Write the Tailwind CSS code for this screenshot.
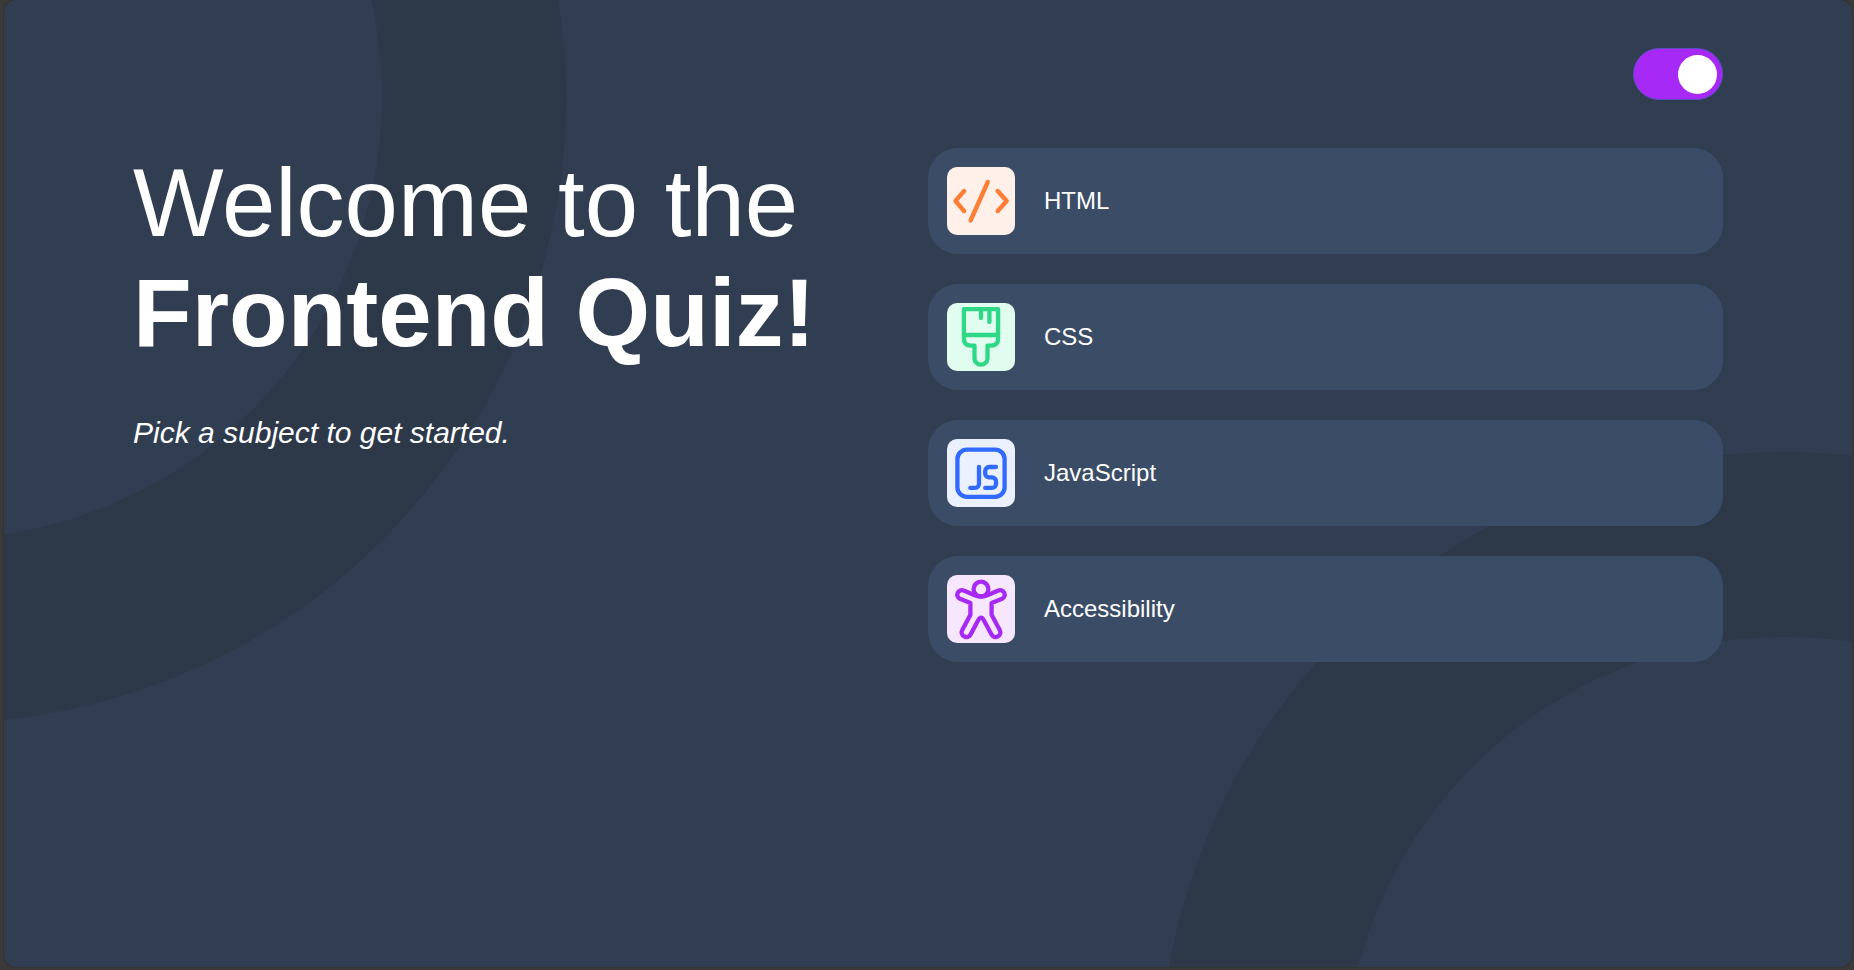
<!DOCTYPE html>
<html lang="en">
<head>
<meta charset="UTF-8">
<meta name="viewport" content="width=device-width, initial-scale=1">
<title>Frontend Quiz</title>
<script src="https://cdn.jsdelivr.net/npm/@tailwindcss/browser@4"></script>
</head>
<body class="flex min-h-screen bg-[#3a3a3a] pr-0.5 pb-[3px] pl-1 font-['Liberation_Sans',Arial,sans-serif] text-white">
  <div class="relative isolate flex-1 overflow-hidden rounded-xl bg-[#313e51] px-[129px] shadow-[0_0_2px_rgba(0,0,0,0.35)]">
    <!-- Background rings -->
    <div class="absolute -top-[529px] -left-[690px] -z-10 size-[1252px] rounded-full border-[184px] border-[#2d3949]" aria-hidden="true"></div>
    <div class="absolute -right-[559px] -bottom-[737px] -z-10 size-[1252px] rounded-full border-[185px] border-[#2d3949]" aria-hidden="true"></div>

    <header class="flex justify-end py-12">
      <input id="theme" type="checkbox" role="switch" aria-label="Dark mode" checked class="flex h-[52px] w-[90px] cursor-pointer appearance-none items-center rounded-full border border-[#5a4fc0] bg-[#a729f5] px-[5px] before:size-[39px] before:rounded-full before:bg-white checked:justify-end">
    </header>

    <main class="grid grid-cols-2">
      <section>
        <h1 class="text-[96px] leading-[110px]">Welcome to the<br><strong class="font-bold">Frontend Quiz!</strong></h1>
        <p class="mt-12 text-[30px] leading-[34px] italic">Pick a subject to get started.</p>
      </section>

      <ul class="flex flex-col gap-[30px]">
        <li>
          <button type="button" class="flex h-[106px] w-full cursor-pointer items-center gap-[29px] rounded-[30px] bg-[#3b4d66] px-[19px] text-left text-2xl">
            <svg class="size-[68px] rounded-[10px] bg-[#fff1e9]" viewBox="0 0 68 68" fill="none" stroke="#ff7e35" stroke-width="4.4" stroke-linecap="round" stroke-linejoin="round" aria-hidden="true"><path d="M17.1 24 8.500 34l8.600 10M40.800 15l-17.200 38.500M50.700 24l9 10-9 10"/></svg>
            HTML
          </button>
        </li>
        <li>
          <button type="button" class="flex h-[106px] w-full cursor-pointer items-center gap-[29px] rounded-[30px] bg-[#3b4d66] px-[19px] text-left text-2xl">
            <svg class="size-[68px] rounded-[10px] bg-[#e0fdef]" viewBox="0 0 68 68" fill="none" stroke="#2fd887" stroke-width="4.300" stroke-linecap="round" stroke-linejoin="round" aria-hidden="true"><path d="M16.900 6.200h34.200v29.600q0 6.800-6.800 6.800h-3.800v12.600a6.500 6.500 0 0 1-13 0V42.600h-3.800q-6.800 0-6.800-6.800zM16.900 32h34.200M34 6.200V15M42.400 6.200V19"/></svg>
            CSS
          </button>
        </li>
        <li>
          <button type="button" class="flex h-[106px] w-full cursor-pointer items-center gap-[29px] rounded-[30px] bg-[#3b4d66] px-[19px] text-left text-2xl">
            <svg class="size-[68px] rounded-[10px] bg-[#ebf0ff]" viewBox="0 0 68 68" fill="none" stroke="#306aff" stroke-width="4.300" stroke-linecap="round" stroke-linejoin="round" aria-hidden="true"><rect x="10.400" y="10.600" width="47.200" height="47.200" rx="9.500"/><path d="M32 28V44.900a4 4 0 0 1-4 4H23.300M49 28H42.200a4 4 0 0 0-4 4V34.400a4 4 0 0 0 4 4H45a4 4 0 0 1 4 4V44.900a4 4 0 0 1-4 4H38.200"/></svg>
            JavaScript
          </button>
        </li>
        <li>
          <button type="button" class="flex h-[106px] w-full cursor-pointer items-center gap-[29px] rounded-[30px] bg-[#3b4d66] px-[19px] text-left text-2xl">
            <svg class="size-[68px] rounded-[10px] bg-[#f6e7ff]" viewBox="0 0 68 68" fill="none" stroke="#a729f5" stroke-width="4.300" stroke-linejoin="round" aria-hidden="true"><circle cx="34" cy="14.100" r="7.400"/><path d="M34 21.500Q30.500 21.500 26.500 19.800L16.700 15.600A4.500 4.500 0 0 0 12.900 23.800L23.400 28V39.800L15.300 55A4.700 4.700 0 0 0 23.500 59.600L31.300 45Q34 40.200 36.700 45L44.500 59.600A4.700 4.700 0 0 0 52.700 55L44.600 39.800V28L55.100 23.800A4.500 4.500 0 0 0 51.300 15.600L41.500 19.800Q37.500 21.500 34 21.500Z"/></svg>
            Accessibility
          </button>
        </li>
      </ul>
    </main>
  </div>
</body>
</html>
